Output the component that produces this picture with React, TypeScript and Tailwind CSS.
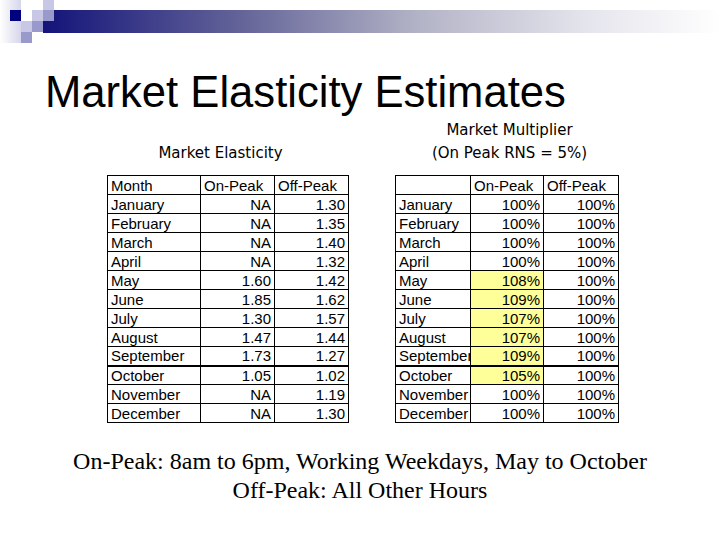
const elasticity = [
  ["January", "NA", "1.30"],
  ["February", "NA", "1.35"],
  ["March", "NA", "1.40"],
  ["April", "NA", "1.32"],
  ["May", "1.60", "1.42"],
  ["June", "1.85", "1.62"],
  ["July", "1.30", "1.57"],
  ["August", "1.47", "1.44"],
  ["September", "1.73", "1.27"],
  ["October", "1.05", "1.02"],
  ["November", "NA", "1.19"],
  ["December", "NA", "1.30"],
];

const multiplier = [
  ["January", "100%", "100%"],
  ["February", "100%", "100%"],
  ["March", "100%", "100%"],
  ["April", "100%", "100%"],
  ["May", "108%", "100%"],
  ["June", "109%", "100%"],
  ["July", "107%", "100%"],
  ["August", "107%", "100%"],
  ["September", "109%", "100%"],
  ["October", "105%", "100%"],
  ["November", "100%", "100%"],
  ["December", "100%", "100%"],
];

const peakMonths = ["May", "June", "July", "August", "September", "October"];

function HeaderArt() {
  return (
    <svg width="720" height="45" viewBox="0 0 720 45" className="block">
      <defs>
        <linearGradient id="bar" x1="0" x2="1" y1="0" y2="0">
          <stop offset="0" stopColor="#13137a" />
          <stop offset="0.3" stopColor="#66669a" />
          <stop offset="0.55" stopColor="#b2b2c6" />
          <stop offset="0.8" stopColor="#e4e4ec" />
          <stop offset="1" stopColor="#ffffff" />
        </linearGradient>
        <linearGradient id="pale" x1="0" x2="1" y1="0" y2="0">
          <stop offset="0" stopColor="#ffffff" />
          <stop offset="1" stopColor="#d6d6ec" />
        </linearGradient>
      </defs>
      <rect x="0" y="0" width="21" height="43" fill="url(#pale)" />
      <rect x="43" y="10" width="677" height="23" fill="url(#bar)" />
      <rect x="10" y="10" width="11" height="11" fill="#000080" />
      <rect x="43" y="0" width="11" height="10" fill="#c8c8e6" />
      <rect x="32" y="10" width="11" height="11" fill="#c8c8e6" />
      <rect x="43" y="10" width="11" height="11" fill="#9999cc" />
      <rect x="21" y="21" width="11" height="11" fill="#c8c8e6" />
      <rect x="32" y="21" width="11" height="11" fill="#9999cc" />
      <rect x="21" y="32" width="11" height="11" fill="#9999cc" />
    </svg>
  );
}

function DataTable({
  head,
  rows,
  widths,
  highlight,
}: {
  head: string[];
  rows: string[][];
  widths: number[];
  highlight?: boolean;
}) {
  const total = widths.reduce((a, b) => a + b, 0);
  return (
    <table
      className="table-fixed border-collapse border border-black font-['Liberation_Sans',Arial,sans-serif] text-[15px] text-black"
      style={{ width: total }}
    >
      <colgroup>
        {widths.map((w, i) => (
          <col key={i} style={{ width: w }} />
        ))}
      </colgroup>
      <thead>
        <tr>
          {head.map((h, i) => (
            <th key={i} className="h-[19px] border border-black px-[3px] py-0 text-left font-normal leading-[17px]">
              {h}
            </th>
          ))}
        </tr>
      </thead>
      <tbody>
        {rows.map((r) => {
          const hot = highlight && peakMonths.includes(r[0]);
          const sep = r[0] === "September" ? "border-b-2" : "";
          return (
            <tr key={r[0]}>
              <td className={`h-[19px] overflow-hidden whitespace-nowrap border border-black py-0 pl-[3px] pr-0 leading-[17px] ${sep}`}>
                {r[0]}
              </td>
              <td
                className={`h-[19px] border border-black px-[3px] py-0 text-right leading-[17px] ${sep} ${
                  hot ? "bg-[#ffff99]" : ""
                }`}
              >
                {r[1]}
              </td>
              <td className={`h-[19px] border border-black px-[3px] py-0 text-right leading-[17px] ${sep}`}>{r[2]}</td>
            </tr>
          );
        })}
      </tbody>
    </table>
  );
}

export default function App() {
  return (
    <div className="h-[540px] w-[720px] overflow-hidden bg-white">
      <HeaderArt />
      <h1 className="ml-[45px] mt-[25px] font-['Liberation_Sans',Arial,sans-serif] text-[43.6px] leading-[44px] text-black">
        Market Elasticity Estimates
      </h1>

      <div className="mt-[5px] flex font-['DejaVu_Sans',Verdana,sans-serif] text-[15px] text-black">
        <div className="ml-[107px] flex w-[241px] flex-col">
          <div className="flex h-[46px] items-end justify-center pr-[14px] leading-[23px]">Market Elasticity</div>
          <div className="mt-[10px]">
            <DataTable head={["Month", "On-Peak", "Off-Peak"]} rows={elasticity} widths={[93, 74, 74]} />
          </div>
        </div>

        <div className="ml-[47px] flex w-[223px] flex-col">
          <div className="flex h-[46px] flex-col items-center justify-end pl-[6px] leading-[23px]">
            <span>Market Multiplier</span>
            <span>(On Peak RNS = 5%)</span>
          </div>
          <div className="mt-[10px]">
            <DataTable head={["", "On-Peak", "Off-Peak"]} rows={multiplier} widths={[75, 73, 75]} highlight />
          </div>
        </div>
      </div>

      <div className="mt-[24px] text-center font-['Liberation_Serif','Times_New_Roman',serif] text-[24px] leading-[29px] text-black">
        <p>On-Peak: 8am to 6pm, Working Weekdays, May to October</p>
        <p>Off-Peak: All Other Hours</p>
      </div>
    </div>
  );
}
